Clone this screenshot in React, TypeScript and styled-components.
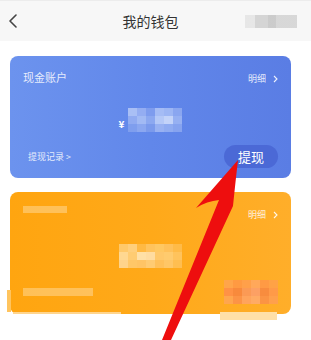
import styled, { createGlobalStyle } from 'styled-components';

const GlobalStyle = createGlobalStyle`
  html, body {
    margin: 0;
    padding: 0;
    background: #ffffff;
  }
  body {
    font-family: "Noto Sans CJK SC", "Noto Sans", "Liberation Sans", sans-serif;
  }
`;

const Page = styled.div`
  position: relative;
  width: 311px;
  height: 340px;
  overflow: hidden;
  background: #ffffff;
`;

const Header = styled.header`
  height: 41px;
  display: grid;
  grid-template-columns: 50px 1fr 60px;
  align-items: center;
  background: #f7f7f7;
  border-top: 1px solid #ececec;
  box-sizing: border-box;
`;

const Back = styled.button`
  border: none;
  background: none;
  padding: 0 0 0 8px;
  display: flex;
  align-items: center;
  height: 100%;
`;

const Title = styled.h1`
  margin: 0;
  text-align: center;
  font-size: 14px;
  font-weight: 400;
  color: #333333;
`;

const HeaderBlur = styled.div`
  justify-self: end;
  margin-right: 14px;
  width: 52px;
  height: 13px;
  background: linear-gradient(90deg, #e4e4e4 0 20%, #cfcfcf 20% 45%, #c4c4c4 45% 60%, #d2d2d2 60% 100%);
  opacity: 0.85;
`;

const Content = styled.main`
  display: flex;
  flex-direction: column;
  gap: 14px;
  padding: 15px 20px 0 10px;
`;

const Card = styled.section<{ $tone: 'blue' | 'orange' }>`
  position: relative;
  height: 122px;
  border-radius: 8px;
  box-sizing: border-box;
  padding: 14px 13px 10px 13px;
  display: flex;
  flex-direction: column;
  color: #ffffff;
  background: ${(p) =>
    p.$tone === 'blue'
      ? 'linear-gradient(90deg, #6c93ee 0%, #6187ea 50%, #5a7de4 100%)'
      : 'linear-gradient(90deg, #ffa510 0%, #ffa919 50%, #ffae2a 100%)'};
`;

const TopRow = styled.div`
  display: flex;
  justify-content: space-between;
  align-items: flex-start;
  height: 16px;
`;

const CardLabel = styled.span`
  font-size: 11px;
  line-height: 14px;
  color: rgba(255, 255, 255, 0.85);
`;

const Detail = styled.span`
  margin-top: 3px;
  display: flex;
  align-items: center;
  gap: 7px;
  font-size: 9px;
  line-height: 11px;
  color: rgba(255, 255, 255, 0.85);
`;

const Middle = styled.div`
  flex: 1;
  display: flex;
  justify-content: center;
  align-items: center;
  gap: 4px;
  padding-top: 9px;
`;

const Yen = styled.span`
  font-size: 10px;
  font-weight: 700;
  margin-top: 8px;
  color: #ffffff;
`;

const BottomRow = styled.div`
  display: flex;
  justify-content: space-between;
  align-items: center;
  height: 24px;
`;

const History = styled.span`
  padding-left: 5px;
  font-size: 9px;
  color: rgba(255, 255, 255, 0.85);
`;

const WithdrawButton = styled.button`
  width: 54px;
  height: 23px;
  border: none;
  border-radius: 12px;
  background: #4b69d6;
  color: #ffffff;
  font-family: inherit;
  font-size: 13px;
  line-height: 23px;
  padding: 0;
`;

const Bar = styled.div<{ $w: number; $h: number; $c: string }>`
  width: ${(p) => p.$w}px;
  height: ${(p) => p.$h}px;
  background: ${(p) => p.$c};
`;

const Mosaic = styled.div<{ $cols: number; $cell: number; $row: number }>`
  display: grid;
  grid-template-columns: repeat(${(p) => p.$cols}, ${(p) => p.$cell}px);
  grid-auto-rows: ${(p) => p.$row}px;
`;

const Cell = styled.div<{ $c: string }>`
  background: ${(p) => p.$c};
`;

const UnderTab = styled.div<{ $left: number; $w: number; $c: string; $top: number; $h: number }>`
  position: absolute;
  left: ${(p) => p.$left}px;
  top: ${(p) => p.$top}px;
  width: ${(p) => p.$w}px;
  height: ${(p) => p.$h}px;
  background: ${(p) => p.$c};
`;

const Arrow = styled.svg`
  position: absolute;
  left: 0;
  top: 0;
  pointer-events: none;
`;

const blueCells = [
  '#a9bff5', '#94adf2', '#7e9cee', '#a5bcf5', '#9db6f4', '#8aa6f0',
  '#91abf1', '#a2baf4', '#8ca8f0', '#b4c8f7', '#c3d3f9', '#96b0f2',
  '#7f9eee', '#8ba7f0', '#7b9aec', '#98b1f2', '#8fabf1', '#86a3ef',
];

const orangeMidCells = [
  '#ffc96a', '#ffcf7c', '#ffb943', '#ffc35d', '#ffc862', '#ffc15a', '#ffbb48',
  '#ffd891', '#ffcc72', '#ffe0a6', '#ffdca0', '#ffc86a', '#ffcb6e', '#ffc35c',
  '#ffd38a', '#ffc768', '#ffc465', '#ffcb73', '#ffc05a', '#ffc666', '#ffbe50',
];

const orangeRightCells = [
  '#ffa54a', '#ff9a42', '#ffa04a', '#ffa85a', '#ff9a44', '#ffa246',
  '#ff9245', '#f88a3c', '#fb9a55', '#fca064', '#f88c3e', '#ff9a48',
  '#ffa64e', '#fc9446', '#ffa45c', '#ffab64', '#fb9444', '#ffa04c',
];

function Chevron() {
  return (
    <svg width="10" height="14" viewBox="0 0 10 14">
      <path d="M8 1 L2 7 L8 13" fill="none" stroke="#444" strokeWidth="1.6" strokeLinecap="round" strokeLinejoin="round" />
    </svg>
  );
}

function SmallChevron() {
  return (
    <svg width="5" height="8" viewBox="0 0 5 8">
      <path d="M1 1 L4 4 L1 7" fill="none" stroke="rgba(255,255,255,0.9)" strokeWidth="1.1" />
    </svg>
  );
}

export default function App() {
  return (
    <Page>
      <GlobalStyle />
      <Header>
        <Back type="button" aria-label="返回">
          <Chevron />
        </Back>
        <Title>我的钱包</Title>
        <HeaderBlur />
      </Header>
      <Content>
        <Card $tone="blue">
          <TopRow>
            <CardLabel>现金账户</CardLabel>
            <Detail>
              明细
              <SmallChevron />
            </Detail>
          </TopRow>
          <Middle>
            <Yen>¥</Yen>
            <Mosaic $cols={6} $cell={9} $row={8}>
              {blueCells.map((c, i) => (
                <Cell key={i} $c={c} />
              ))}
            </Mosaic>
          </Middle>
          <BottomRow>
            <History>提现记录 &gt;</History>
            <WithdrawButton type="button">提现</WithdrawButton>
          </BottomRow>
        </Card>
        <Card $tone="orange">
          <TopRow>
            <Bar $w={44} $h={7} $c="rgba(255,255,255,0.3)" />
            <Detail>
              明细
              <SmallChevron />
            </Detail>
          </TopRow>
          <Middle>
            <Mosaic $cols={7} $cell={9} $row={8}>
              {orangeMidCells.map((c, i) => (
                <Cell key={i} $c={c} />
              ))}
            </Mosaic>
          </Middle>
          <BottomRow>
            <Bar $w={70} $h={8} $c="rgba(255,255,255,0.3)" />
            <Mosaic $cols={6} $cell={9} $row={8}>
              {orangeRightCells.map((c, i) => (
                <Cell key={i} $c={c} />
              ))}
            </Mosaic>
          </BottomRow>
          <UnderTab $left={-3} $top={98} $w={4} $h={22} $c="#ffc45e" />
          <UnderTab $left={3} $top={120} $w={108} $h={2} $c="#ffd58e" />
          <UnderTab $left={210} $top={120} $w={57} $h={8} $c="#ffe0a8" />
        </Card>
      </Content>
      <Arrow width="311" height="340" viewBox="0 0 311 340">
        <path
          d="M238 160 L196 208 Q207 201 219 200 L162 340 L171 340 L233 206 Q235 186 238 160 Z"
          fill="#ee0e0e"
        />
      </Arrow>
    </Page>
  );
}
